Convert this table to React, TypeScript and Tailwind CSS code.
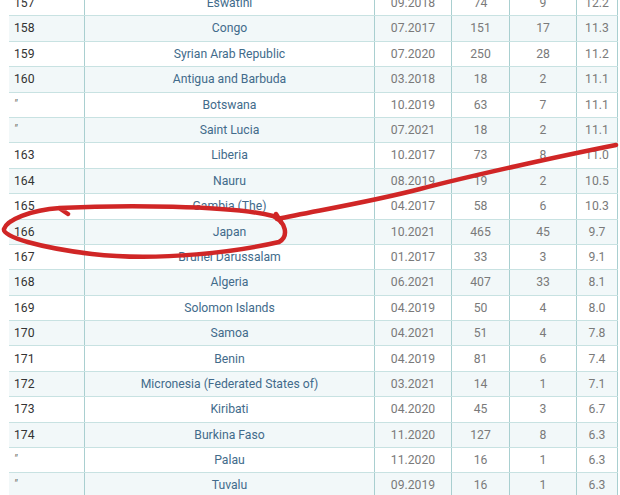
import React from 'react';

type Row = [string, string, string, string, string, string];

const rows: Row[] = [
  ['157', 'Eswatini', '09.2018', '74', '9', '12.2'],
  ['158', 'Congo', '07.2017', '151', '17', '11.3'],
  ['159', 'Syrian Arab Republic', '07.2020', '250', '28', '11.2'],
  ['160', 'Antigua and Barbuda', '03.2018', '18', '2', '11.1'],
  ['″', 'Botswana', '10.2019', '63', '7', '11.1'],
  ['″', 'Saint Lucia', '07.2021', '18', '2', '11.1'],
  ['163', 'Liberia', '10.2017', '73', '8', '11.0'],
  ['164', 'Nauru', '08.2019', '19', '2', '10.5'],
  ['165', 'Gambia (The)', '04.2017', '58', '6', '10.3'],
  ['166', 'Japan', '10.2021', '465', '45', '9.7'],
  ['167', 'Brunei Darussalam', '01.2017', '33', '3', '9.1'],
  ['168', 'Algeria', '06.2021', '407', '33', '8.1'],
  ['169', 'Solomon Islands', '04.2019', '50', '4', '8.0'],
  ['170', 'Samoa', '04.2021', '51', '4', '7.8'],
  ['171', 'Benin', '04.2019', '81', '6', '7.4'],
  ['172', 'Micronesia (Federated States of)', '03.2021', '14', '1', '7.1'],
  ['173', 'Kiribati', '04.2020', '45', '3', '6.7'],
  ['174', 'Burkina Faso', '11.2020', '127', '8', '6.3'],
  ['″', 'Palau', '11.2020', '16', '1', '6.3'],
  ['″', 'Tuvalu', '09.2019', '16', '1', '6.3'],
];

// red marker scribble on top of the table
const Scribble: React.FC = () => (
  <svg className="absolute inset-0 pointer-events-none" width="620" height="495" viewBox="0 0 620 495">
    <g fill="none" stroke="#d02626" strokeWidth="4.5" strokeLinecap="round" strokeLinejoin="round">
      <path d="M616,145 C560,156 470,176 420,189 C370,202 320,210 277,219" />
      <path d="M276,214 L281,222" />
      <path d="M68,214 L59,208 C120,205 230,205 273,216 C286,222 289,236 279,242 C240,251 160,262 92,254 C42,248 2,237 4,229 C7,220 30,210 60,208" />
    </g>
  </svg>
);

export default function App() {
  return (
    <div className="relative w-[620px] h-[495px] overflow-hidden bg-white font-['Roboto',sans-serif] text-[12.2px]">
      <div className="ml-[9px] w-[609px] -mt-[9px]">
        {rows.map((r, i) => (
          <div
            key={i}
            className={`grid grid-cols-[76px_290px_77px_58px_67px_41px] h-[25.4px] border-b-[1.5px] border-[#c8e2e2] ${
              i % 2 === 1 ? 'bg-[#f2f8f9]' : 'bg-white'
            }`}
          >
            {r[0] === '″' ? (
              <div className="pl-[5px] pt-[3px] text-[11px] italic text-[#666] border-r border-[#a9cfd0]">{r[0]}</div>
            ) : (
              <div className="flex items-center pl-[5px] text-[#333] border-r border-[#a9cfd0]">{r[0]}</div>
            )}
            <div className="flex items-center justify-center text-[#426b8b] border-r border-[#a9cfd0]">{r[1]}</div>
            <div className="flex items-center justify-center text-[#7a7a7a] border-r border-[#a9cfd0]">{r[2]}</div>
            <div className="flex items-center justify-center text-[#7a7a7a] border-r border-[#a9cfd0]">{r[3]}</div>
            <div className="flex items-center justify-center text-[#7a7a7a] border-r border-[#a9cfd0]">{r[4]}</div>
            <div className="flex items-center justify-center text-[#7a7a7a] border-r border-[#a9cfd0]">{r[5]}</div>
          </div>
        ))}
      </div>
      <Scribble />
    </div>
  );
}
